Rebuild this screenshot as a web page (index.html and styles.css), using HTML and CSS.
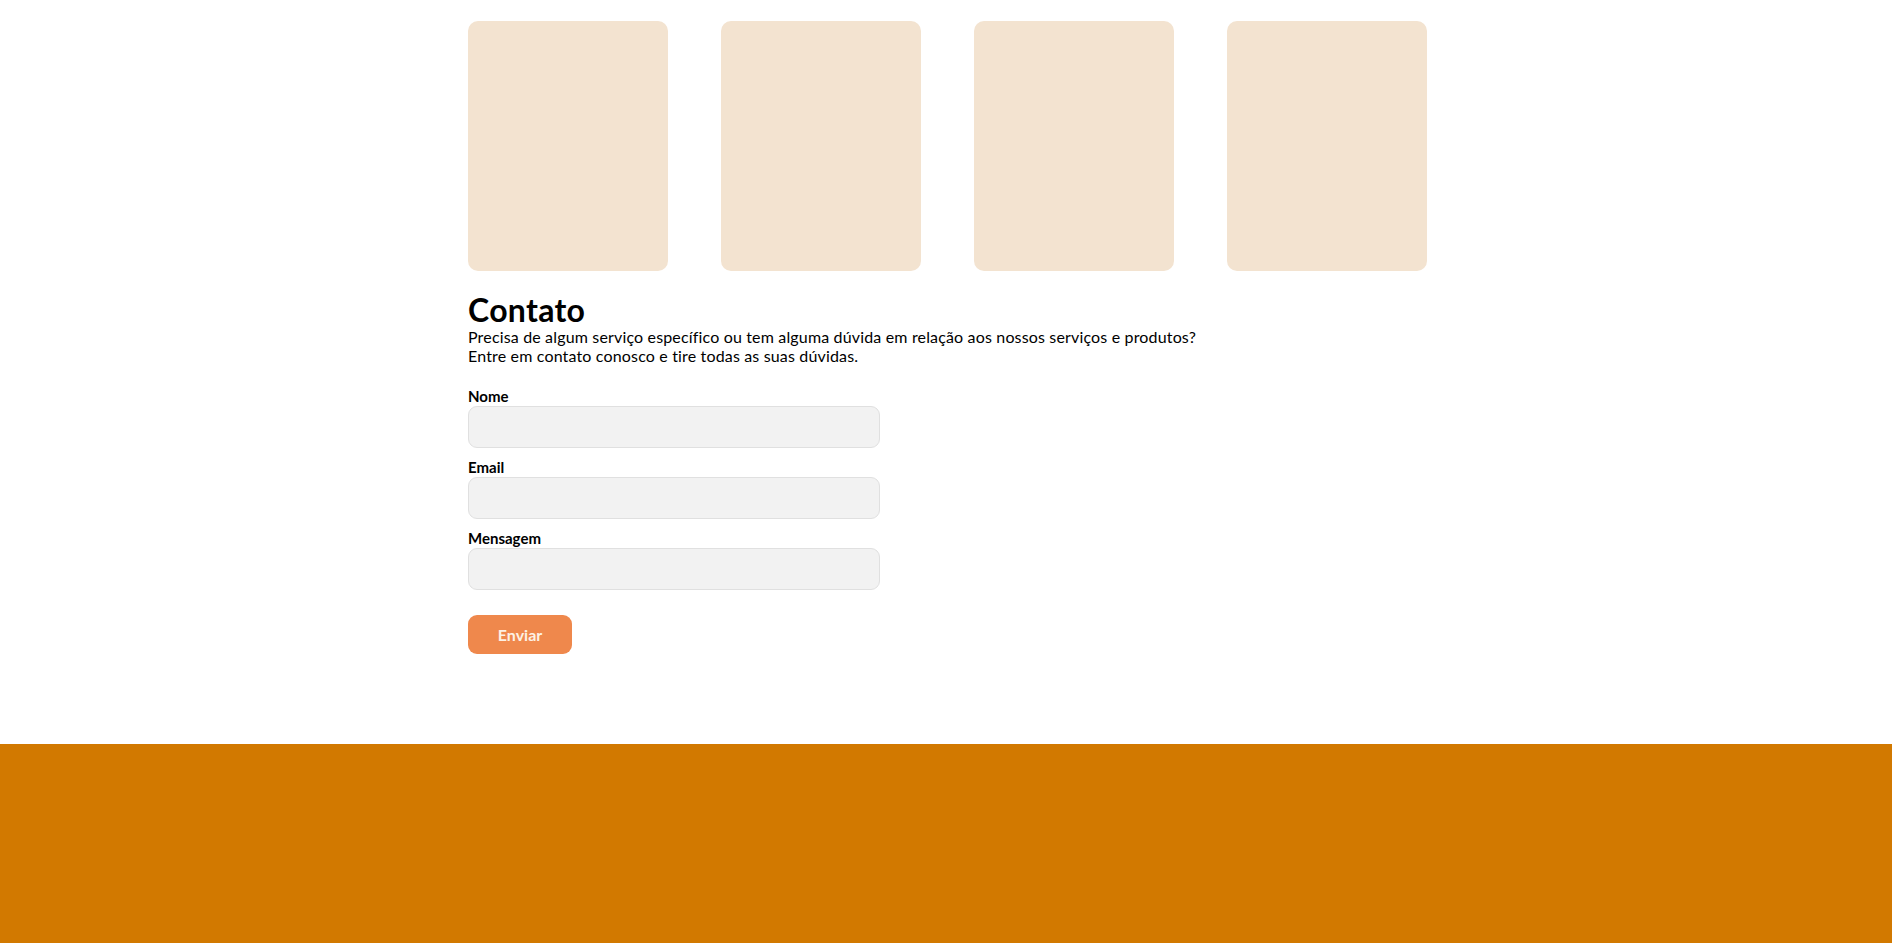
FILE: index.html
```html
<!DOCTYPE html>
<html lang="pt-BR">
<head>
<meta charset="utf-8">
<title>Contato</title>
<link rel="stylesheet" href="styles.css">
</head>
<body>
<main class="container">
  <section class="cards">
    <div class="card"></div>
    <div class="card"></div>
    <div class="card"></div>
    <div class="card"></div>
  </section>
  <section class="contact">
    <h1 class="contact-title">Contato</h1>
    <p class="contact-text">Precisa de algum serviço específico ou tem alguma dúvida em relação aos nossos serviços e produtos?<br>Entre em contato conosco e tire todas as suas dúvidas.</p>
    <form class="form">
      <div class="field">
        <label class="label" for="nome">Nome</label>
        <input class="input" id="nome" type="text">
      </div>
      <div class="field">
        <label class="label" for="email">Email</label>
        <input class="input" id="email" type="email">
      </div>
      <div class="field">
        <label class="label" for="mensagem">Mensagem</label>
        <input class="input" id="mensagem" type="text">
      </div>
      <button class="button" type="button">Enviar</button>
    </form>
  </section>
</main>
<footer class="footer"></footer>
</body>
</html>
```
FILE: styles.css
```css
* { box-sizing: border-box; }

html, body {
  margin: 0;
  padding: 0;
  background: #ffffff;
}

body {
  font-family: "Lato", "DejaVu Sans", sans-serif;
  color: #000000;
}

.container {
  box-sizing: content-box;
  width: 959px;
  padding: 21px 0 90px 3px;
  margin: 0 auto;
}

.cards {
  display: grid;
  grid-template-columns: repeat(4, 200px);
  column-gap: 53px;
}

.card {
  height: 250px;
  background: #f3e3d0;
  border-radius: 10px;
}

.contact {
  padding-top: 20px;
}

.contact-title {
  margin: 0;
  font-size: 32px;
  line-height: 37px;
  font-weight: 700;
  letter-spacing: 0.3px;
}

.contact-text {
  margin: 0;
  font-size: 16px;
  line-height: 18.5px;
  letter-spacing: 0.16px;
}

.form {
  display: flex;
  flex-direction: column;
  align-items: flex-start;
  padding-top: 23px;
}

.field {
  display: flex;
  flex-direction: column;
  gap: 2px;
  margin-bottom: 11px;
}

.label {
  font-size: 15px;
  line-height: 16px;
  font-weight: 700;
}

.input {
  width: 412px;
  height: 42px;
  background: #f2f2f2;
  border: 1px solid #e0e0e0;
  border-radius: 9px;
  font: inherit;
  padding: 0 10px;
}

.button {
  margin-top: 14px;
  width: 104px;
  height: 39px;
  border: none;
  border-radius: 9px;
  background: #ef884c;
  color: #fdf1e4;
  font-family: inherit;
  font-size: 16px;
  font-weight: 700;
  padding: 0;
}

.footer {
  height: 200px;
  background: #d27900;
}
```
